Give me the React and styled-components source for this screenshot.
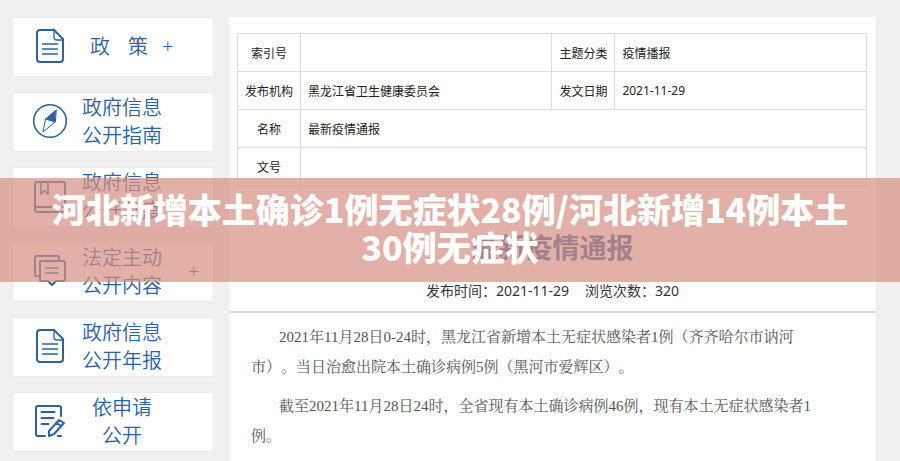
import React from 'react';
import styled, {createGlobalStyle} from 'styled-components';

const GlobalStyle = createGlobalStyle`
  * {
    box-sizing: border-box;
  }

  body {
    margin: 0;
    background: #f0f0f0;
    font-family: "Noto Sans", "Noto Sans CJK SC", sans-serif;
  }
`

const DocIcon = () => (
    <Icon viewBox="0 0 36 36">
        <path d="M22 2H8a3 3 0 0 0-3 3v26a3 3 0 0 0 3 3h20a3 3 0 0 0 3-3V11z"/>
        <path d="M22 2v7a3 3 0 0 0 3 3h6M10.500 16h15M10.500 21h15M10.500 26h15" strokeWidth="1.3"/>
    </Icon>
);

const CompassIcon = () => (
    <Icon viewBox="0 0 36 36">
        <circle cx="18" cy="18" r="16.300" strokeWidth="1.6"/>
        <path d="M24 7L13.500 16l9.500 3z" fill="currentColor" strokeWidth="1"/>
        <path d="M13.500 16l-2.500 13L23 19" strokeWidth="1"/>
    </Icon>
);

const BookIcon = () => (
    <Icon viewBox="0 0 36 36">
        <path d="M33 28V6a2 2 0 0 0-2-2H5a2 2 0 0 0-2 2v26a2 2 0 0 0 2 2h28M4 29h29v5"/>
        <path d="M9 4v12l3.500-3.500L16 16V4" strokeWidth="1.6"/>
    </Icon>
);

const ChatIcon = () => (
    <Icon viewBox="0 0 36 36">
        <path d="M27 7V4a1 1 0 0 0-1-1H4a1 1 0 0 0-1 1v18a1 1 0 0 0 1 1h3"/>
        <path d="M9 8h22a2 2 0 0 1 2 2v16a2 2 0 0 1-2 2h-7l-4 4-4-4H9a1 1 0 0 1-1-1V9a1 1 0 0 1 1-1z"/>
        <path d="M14 15h12M14 20h12" strokeWidth="1.6"/>
    </Icon>
);

const EditIcon = () => (
    <Icon viewBox="0 0 36 36">
        <path d="M29 13V5a2 2 0 0 0-2-2H6a2 2 0 0 0-2 2v26a2 2 0 0 0 2 2h7"/>
        <path d="M9.500 9h13M9.500 15h12M9.500 21h7"/>
        <path d="M17 33v-5l10-11 5 3-10 11zM25 20l4 3M26 33h3"/>
    </Icon>
);

const links = [
    {lines: ['政', '策'], icon: <DocIcon/>, plus: true, spread: true},
    {lines: ['政府信息', '公开指南'], icon: <CompassIcon/>},
    {lines: ['政府信息', '公开制度'], icon: <BookIcon/>},
    {lines: ['法定主动', '公开内容'], icon: <ChatIcon/>, plus: true},
    {lines: ['政府信息', '公开年报'], icon: <DocIcon/>},
    {lines: ['依申请', '公开'], icon: <EditIcon/>},
];

const App = () => {
    return (<Page>
        <GlobalStyle/>
        <Layout>
            <Sidebar>
                {links.map((item) => (
                    <SideLink href="#" key={item.lines.join('')}>
                        {item.icon}
                        <LinkText $spread={item.spread}>
                            {item.lines.map((line) => <span key={line}>{line}</span>)}
                        </LinkText>
                        {item.plus ? <Plus $near={item.spread}>+</Plus> : null}
                    </SideLink>
                ))}
            </Sidebar>
            <Article>
                <InfoTable>
                    <colgroup>
                        <LabelCol/>
                        <ValueCol/>
                        <LabelCol/>
                        <ValueCol/>
                    </colgroup>
                    <tbody>
                    <tr>
                        <th scope="row">索引号</th>
                        <td/>
                        <th scope="row">主题分类</th>
                        <td>疫情播报</td>
                    </tr>
                    <tr>
                        <th scope="row">发布机构</th>
                        <td>黑龙江省卫生健康委员会</td>
                        <th scope="row">发文日期</th>
                        <td>2021-11-29</td>
                    </tr>
                    <tr>
                        <th scope="row">名称</th>
                        <td colSpan={3}>最新疫情通报</td>
                    </tr>
                    <tr>
                        <th scope="row">文号</th>
                        <td colSpan={3}/>
                    </tr>
                    </tbody>
                </InfoTable>
                <Title>最新疫情通报</Title>
                <Meta>
                    <span>发布时间：2021-11-29</span>
                    <span>浏览次数：320</span>
                </Meta>
                <Body>
                    <p>2021年11月28日0-24时，黑龙江省新增本土无症状感染者1例（齐齐哈尔市讷河市）。当日治愈出院本土确诊病例5例（黑河市爱辉区）。</p>
                    <p>截至2021年11月28日24时，全省现有本土确诊病例46例，现有本土无症状感染者1例。</p>
                </Body>
            </Article>
        </Layout>
        <Banner>河北新增本土确诊1例无症状28例/河北新增14例本土30例无症状</Banner>
    </Page>);
};

const Page = styled.div`
  position: relative;
  height: 100vh;
  overflow: hidden;
`

const Layout = styled.div`
  display: flex;
  align-items: stretch;
  gap: 15px;
  min-height: 100%;
  padding: 17px 24px 0 12px;
`

const Sidebar = styled.nav`
  display: flex;
  flex-direction: column;
  flex: 0 0 202px;
  gap: 15px;
`

const SideLink = styled.a`
  display: flex;
  align-items: center;
  height: 60px;
  padding: 0 0 2px 19px;
  border: 1px solid #ececec;
  background: #fff;
  color: #2c62a5;
  text-decoration: none;
`

const Icon = styled.svg`
  flex: none;
  width: 36px;
  height: 36px;
  fill: none;
  stroke: currentColor;
  stroke-width: 2;
  stroke-linecap: round;
  stroke-linejoin: round;
`

const LinkText = styled.span`
  display: flex;
  flex-direction: ${({$spread}) => $spread ? 'row' : 'column'};
  gap: ${({$spread}) => $spread ? '18px' : '0'};
  justify-content: center;
  align-items: center;
  width: ${({$spread}) => $spread ? '102px' : '108px'};
  font-family: "Noto Sans CJK SC", sans-serif;
  font-size: 20px;
  font-weight: 350;
  line-height: 28px;
`

const Plus = styled.span`
  margin-left: ${({$near}) => $near ? '-8px' : '12px'};
  font-size: 20px;
  font-weight: 300;
  line-height: 28px;
`

const Article = styled.main`
  flex: 1;
  min-width: 0;
  background: #fff;
`

const InfoTable = styled.table`
  width: calc(100% - 17px);
  margin: 16px 8px 0;
  border-collapse: collapse;
  table-layout: fixed;
  color: #222;
  font-size: 12px;

  th, td {
    height: 38px;
    padding: 0 7px;
    border: 1px solid #dcdcdc;
    font-weight: 400;
    text-align: left;
  }

  th {
    padding: 0;
    text-align: center;
  }
`

const LabelCol = styled.col`
  width: 10%;
`

const ValueCol = styled.col`
  width: 40%;
`

const Title = styled.h1`
  margin: 44px 0 0;
  color: #2c62a5;
  font-size: 27px;
  font-weight: 700;
  line-height: 36px;
  text-align: center;
`

const Meta = styled.div`
  display: flex;
  justify-content: center;
  gap: 16px;
  padding: 15px 0 10px;
  border-bottom: 2px solid #d8d8d8;
  color: #333;
  font-size: 14px;
  line-height: 20px;
`

const Body = styled.div`
  padding: 9px 56px 0 22px;
  color: #555;
  font-family: "Liberation Serif", "Noto Serif CJK SC", "Noto Sans CJK SC", serif;
  font-size: 15px;
  line-height: 30px;
  text-spacing-trim: space-all;

  p {
    margin: 0 0 9px;
    text-indent: 28px;
  }
`

const Banner = styled.div`
  position: absolute;
  top: 178px;
  left: 0;
  right: 0;
  padding: 12px 45px 16px;
  background: rgba(213, 142, 130, 0.7);
  color: #fff;
  font-family: "Noto Sans CJK SC", sans-serif;
  font-size: 34px;
  font-weight: 900;
  line-height: 38px;
  text-align: center;
`

export default App;
